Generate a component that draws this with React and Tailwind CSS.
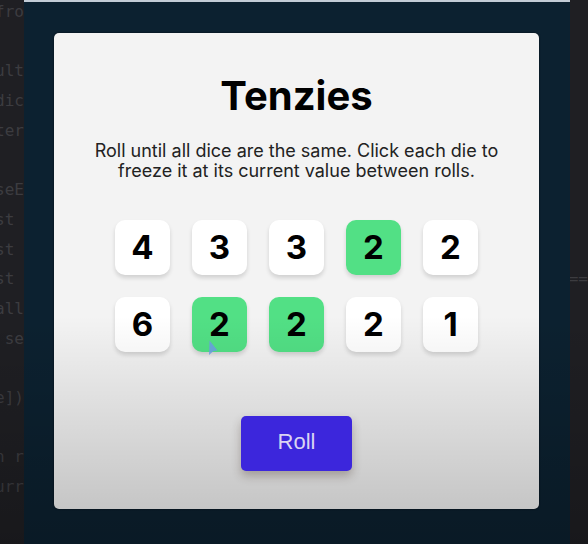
import { useState } from "react";

const INITIAL_DICE = [
  { value: 4, held: false },
  { value: 3, held: false },
  { value: 3, held: false },
  { value: 2, held: true },
  { value: 2, held: false },
  { value: 6, held: false },
  { value: 2, held: true },
  { value: 2, held: true },
  { value: 2, held: false },
  { value: 1, held: false },
];

const LEFT_CODE = ["fro", "", "ult", "dic", "ter", "", "seE", "st ", "st ", "st ", "all", " se", "", "e])", "", "n r", "urr"];
const RIGHT_CODE = ["", "", "", "", "", "", "", "", "", "==", "", "", "", "", "", "", ""];

function CodeStrip({ lines, className }) {
  return (
    <div
      aria-hidden="true"
      className={`flex shrink-0 flex-col items-end justify-between overflow-hidden bg-[#1f1f23] pb-[45px] font-['DejaVu_Sans_Mono',monospace] text-base leading-6 text-[#3c3c40] ${className}`}
    >
      {lines.map((line, i) => (
        <div key={i} className="h-6 whitespace-pre">{line}</div>
      ))}
    </div>
  );
}

function Die({ value, held, onClick, children }) {
  return (
    <button
      type="button"
      onClick={onClick}
      aria-pressed={held}
      className={`relative flex h-[55px] items-center justify-center rounded-[10px] text-[33px] leading-none font-bold text-black shadow-[0_3px_4px_rgba(0,0,0,0.14)] ${held ? "bg-[#52e085]" : "bg-white"}`}
    >
      {value}
      {children}
    </button>
  );
}

function Pointer() {
  return (
    <svg aria-hidden="true" viewBox="0 0 10 16" className="absolute top-[43px] left-4 h-4 w-[10px]">
      <path d="M1.5 0.5 L9.5 10.5 L5.5 11 L1 15 Z" fill="#6d9fe8" opacity="0.85" />
    </svg>
  );
}

export default function App() {
  const [dice, setDice] = useState(INITIAL_DICE);

  const toggle = (index) =>
    setDice((old) => old.map((d, i) => (i === index ? { ...d, held: !d.held } : d)));

  const roll = () =>
    setDice((old) => old.map((d) => (d.held ? d : { ...d, value: Math.ceil(Math.random() * 6) })));

  return (
    <div className="relative flex min-h-screen bg-[#0c2130] font-['Inter',sans-serif]">
      <CodeStrip lines={LEFT_CODE} className="w-6" />
      <main className="flex flex-1 flex-col border-t-2 border-[#c3ccd6] pt-[31px] pr-[31px] pb-[35px] pl-[30px]">
        <section className="flex flex-1 flex-col items-center rounded-[5px] bg-[#f3f3f3] px-9 pt-10 pb-[38px] shadow-[0_0_2px_rgba(0,0,0,0.7)]">
          <h1 className="text-[40px] leading-[46px] font-bold text-black">Tenzies</h1>
          <p className="mt-[22px] text-center text-lg leading-5 text-[#222]">
            Roll until all dice are the same. Click each die to
            <br />
            freeze it at its current value between rolls.
          </p>
          <div className="mt-[39px] grid grid-cols-[repeat(5,55px)] gap-[22px]">
            {dice.map((die, i) => (
              <Die key={i} value={die.value} held={die.held} onClick={() => toggle(i)}>
                {i === 6 && <Pointer />}
              </Die>
            ))}
          </div>
          <button
            type="button"
            onClick={roll}
            className="relative z-10 mt-auto h-[55px] w-[111px] rounded-[5px] bg-[#3c26dc] pb-1 font-['Liberation_Sans',sans-serif] text-[22px] leading-none text-[#d9d4f2] shadow-[0_5px_10px_rgba(60,40,30,0.3)]"
          >
            Roll
          </button>
        </section>
      </main>
      <CodeStrip lines={RIGHT_CODE} className="w-[18px]" />
      <div className="pointer-events-none absolute inset-x-0 bottom-0 h-[42%] bg-linear-to-b from-transparent to-black/22" />
    </div>
  );
}
